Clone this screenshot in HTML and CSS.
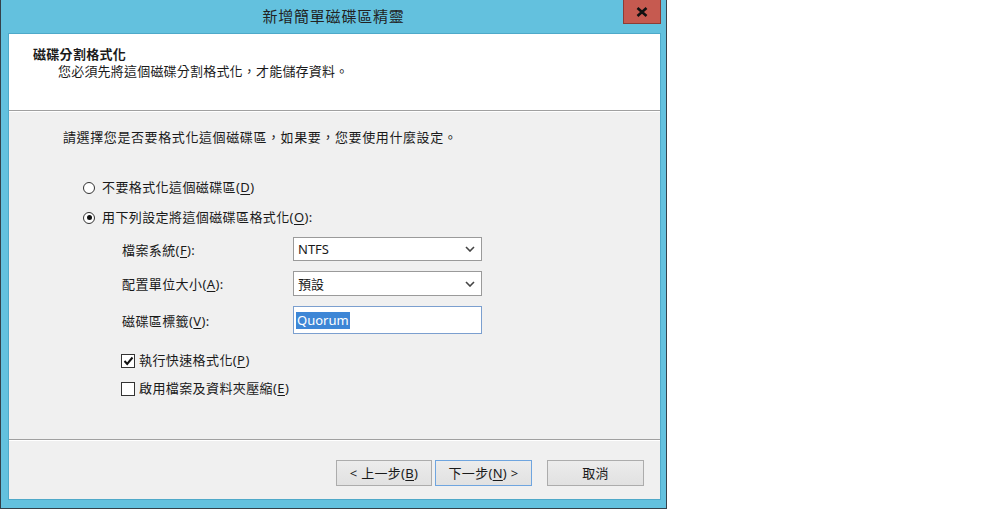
FILE: index.html
```html
<!DOCTYPE html>
<html lang="zh-Hant">
<head>
<meta charset="utf-8">
<title>新增簡單磁碟區精靈</title>
<link rel="stylesheet" href="styles.css">
</head>
<body>
<div class="window">
  <div class="titlebar">
    <div class="tb-side"></div>
    <div class="title">新增簡單磁碟區精靈</div>
    <div class="tb-side tb-controls">
      <div class="close">
        <svg width="12" height="10" viewBox="0 0 12 10"><path d="M1.5 1 L10.5 9 M10.5 1 L1.5 9" stroke="#111" stroke-width="2.6" fill="none"/></svg>
      </div>
    </div>
  </div>
  <div class="client">
    <div class="header">
      <div class="h-title">磁碟分割格式化</div>
      <div class="h-sub">您必須先將這個磁碟分割格式化，才能儲存資料。</div>
    </div>
    <div class="body">
      <div class="intro">請選擇您是否要格式化這個磁碟區，如果要，您要使用什麼設定。</div>
      <div class="option first"><span class="radio"></span><span>不要格式化這個磁碟區(<u>D</u>)</span></div>
      <div class="option second"><span class="radio checked"></span><span>用下列設定將這個磁碟區格式化(<u>O</u>):</span></div>
      <div class="form">
        <div class="lbl">檔案系統(<u>F</u>):</div>
        <div class="select"><span>NTFS</span><svg width="10" height="6" viewBox="0 0 10 6"><path d="M1 1 L5 5 L9 1" stroke="#444" stroke-width="1.6" fill="none"/></svg></div>
        <div class="lbl">配置單位大小(<u>A</u>):</div>
        <div class="select"><span>預設</span><svg width="10" height="6" viewBox="0 0 10 6"><path d="M1 1 L5 5 L9 1" stroke="#444" stroke-width="1.6" fill="none"/></svg></div>
        <div class="lbl">磁碟區標籤(<u>V</u>):</div>
        <div class="textbox"><span class="sel">Quorum</span></div>
      </div>
      <div class="check first"><span class="box"><svg width="11" height="10" viewBox="0 0 11 10"><path d="M1.5 5 L4.2 8 L9.5 1.5" stroke="#111" stroke-width="2" fill="none"/></svg></span><span>執行快速格式化(<u>P</u>)</span></div>
      <div class="check second"><span class="box"></span><span>啟用檔案及資料夾壓縮(<u>E</u>)</span></div>
    </div>
    <div class="footer">
      <div class="btn">&lt; 上一步(<u>B</u>)</div>
      <div class="btn default">下一步(<u>N</u>) &gt;</div>
      <div class="btn cancel">取消</div>
    </div>
  </div>
</div>
</body>
</html>
```
FILE: styles.css
```css
* { box-sizing: border-box; }
html, body { margin: 0; padding: 0; background: #fff; }
body {
  width: 1000px;
  height: 509px;
  font-family: "Noto Sans", "Noto Sans CJK TC", sans-serif;
  font-size: 13px;
  color: #1a1a1a;
}
.window {
  width: 667px;
  height: 509px;
  background: #63c1de;
  border-left: 1px solid #34414a;
  border-right: 1px solid #34414a;
  border-bottom: 1px solid #34414a;
  display: flex;
  flex-direction: column;
  padding: 0 5px 8px 7px;
}
.titlebar {
  height: 33px;
  display: flex;
  margin: 0 -5px 0 -7px;
}
.tb-side { width: 44px; }
.tb-controls { display: flex; justify-content: flex-end; padding-right: 5px; }
.title {
  flex: 1;
  text-align: center;
  font-family: "Noto Sans CJK TC", sans-serif;
  font-size: 15px;
  line-height: 32px;
  color: #222;
  letter-spacing: 0.8px;
}
.close {
  width: 38px;
  height: 24px;
  background: #c65a50;
  border: 1px solid #8d3c35;
  border-top: none;
  display: flex;
  align-items: center;
  justify-content: center;
}
.client {
  flex: 1;
  border: 1px solid #4ea9c9;
  background: #f0f0f0;
  display: flex;
  flex-direction: column;
}
.header {
  height: 77px;
  background: #fff;
  border-bottom: 1px solid #a0a0a0;
  padding: 11px 0 0 24px;
  line-height: 17px;
  font-family: "Noto Sans CJK TC", sans-serif;
  font-size: 13px;
}
.h-title { font-weight: 700; letter-spacing: 0.3px; }
.h-sub { padding-left: 25px; letter-spacing: 0.2px; }
.body {
  flex: 1;
  padding: 18px 0 0 54px;
  display: flex;
  flex-direction: column;
  box-shadow: inset 0 1px 0 #fff;
}
.intro { line-height: 17px; letter-spacing: 0.6px; }
.option {
  display: flex;
  align-items: center;
  line-height: 17px;
  padding-left: 20px;
  letter-spacing: 0.4px;
}
.option.first { margin-top: 33px; }
.option.second { margin-top: 13px; }
.radio {
  width: 12px;
  height: 12px;
  border: 1px solid #333;
  border-radius: 50%;
  background: #fff;
  margin-right: 7px;
  display: flex;
  align-items: center;
  justify-content: center;
}
.radio.checked::after {
  content: "";
  width: 5px;
  height: 5px;
  border-radius: 50%;
  background: #111;
}
u { text-decoration-thickness: 1px; text-underline-offset: 2px; }
.form {
  margin-top: 11px;
  padding-left: 59px;
  display: grid;
  grid-template-columns: 171px 189px;
  grid-template-rows: 24px 25px 28px;
  row-gap: 10px;
  align-items: center;
}
.lbl { letter-spacing: 0.4px; }
.select {
  height: 100%;
  background: #fff;
  border: 1px solid #9a9a9a;
  display: flex;
  align-items: center;
  justify-content: space-between;
  padding: 0 6px 0 4px;
}
.textbox {
  height: 100%;
  background: #fff;
  border: 1px solid #7b9fcf;
  display: flex;
  align-items: center;
  padding-left: 2px;
}
.sel {
  background: #3d86d6;
  color: #fff;
  line-height: 17px;
  padding: 0 1px;
}
.check {
  display: flex;
  align-items: center;
  line-height: 17px;
  padding-left: 58px;
  letter-spacing: 0.4px;
}
.check.first { margin-top: 18px; }
.check.second { margin-top: 11px; }
.box {
  width: 14px;
  height: 14px;
  border: 1px solid #333;
  background: #fff;
  margin-right: 4px;
  display: flex;
  align-items: center;
  justify-content: center;
}
.footer {
  height: 60px;
  border-top: 1px solid #a0a0a0;
  box-shadow: inset 0 1px 0 #fff;
  padding: 20px 16px 0 0;
  display: flex;
  justify-content: flex-end;
  align-items: flex-start;
  gap: 3px;
}
.btn {
  width: 96px;
  height: 26px;
  border: 1px solid #acacac;
  background: linear-gradient(#ececec, #e1e1e1);
  display: flex;
  align-items: center;
  justify-content: center;
  line-height: 17px;
  letter-spacing: 0.3px;
}
.btn.default { border-color: #6fa5df; width: 97px; }
.btn.cancel { margin-left: 12px; width: 97px; }
```
